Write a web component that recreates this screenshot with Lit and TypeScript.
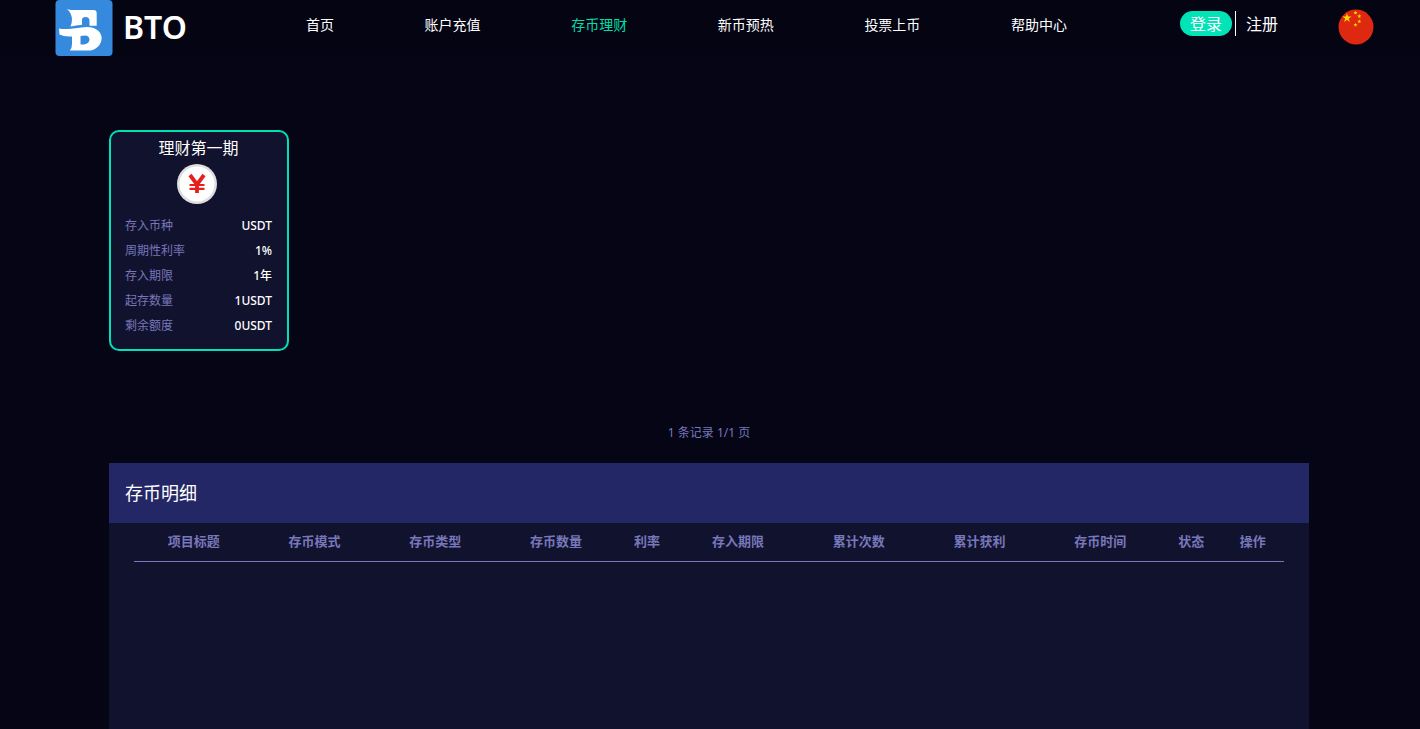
import { LitElement, html, css, svg } from "lit";
import { customElement, property } from "lit/decorators.js";
import { classMap } from "lit/directives/class-map.js";

const STAR = "M0-10 2.25-3.1 9.5-3.1 3.65 1.2 5.9 8.1 0 3.8-5.9 8.1-3.65 1.2-9.5-3.1-2.25-3.1Z";

@customElement("site-header")
class SiteHeader extends LitElement {
  @property() active = "存币理财";

  private links = ["首页", "账户充值", "存币理财", "新币预热", "投票上币", "帮助中心"];

  static styles = css`
    :host {
      display: flex;
      height: 56px;
      padding: 0 46px 0 55px;
      background: #040413;
      color: #fff;
    }
    a {
      color: inherit;
      text-decoration: none;
    }
    .brand {
      display: flex;
      align-items: flex-start;
      gap: 10px;
      width: 251px;
      font: 600 32px/54px "Noto Sans", sans-serif;
    }
    .mark {
      display: block;
      width: 58px;
      height: 56px;
    }
    nav {
      flex: 1;
      display: flex;
      justify-content: space-between;
      font-size: 14px;
      line-height: 50px;
    }
    .current {
      color: #00dfa8;
    }
    .auth {
      display: flex;
      align-items: flex-start;
      gap: 3px;
      padding: 11px 0 0 113px;
      font-size: 16px;
    }
    .auth a {
      height: 25px;
      line-height: 27px;
    }
    .login {
      padding: 0 10px;
      border-radius: 13px;
      background: #00e4b8;
    }
    .register {
      padding-left: 10px;
      border-left: 1px solid #fff;
    }
    .lang {
      width: 36px;
      height: 36px;
      margin: 9px 0 0 60px;
      padding: 0;
      border: 0;
      background: none;
    }
    .lang svg {
      display: block;
    }
  `;

  render() {
    return html`
      <a class="brand" href="#">
        <svg class="mark" viewBox="0 0 58 56" aria-hidden="true">
          <rect x="0.500" width="57" height="56" rx="4" fill="#368ade" />
          <path
            fill="#fff"
            d="M12 9.200C16 10.300 20 10 24 10H38.500Q41.700 10 41.700 13V25.800H34.500V21Q34.500 17 30.500 17Q27 17 27 20V24.800Q21 25.500 15.500 26.500Q17 23 17 19Q16.500 12.500 12 9.200Z"
          />
          <path
            fill="#fff"
            fill-rule="evenodd"
            d="M4 28.500Q8 29.500 16 28.800L29 27.200Q38 26.500 43 30.500Q48 35 46 42Q43.500 48.500 36 50.500H14.800Q17 48.500 17 44V36.500Q9 37 4.500 34.500ZM25.500 36V44.500H29Q34.500 43.500 34.500 39.500Q34 35.500 30 35.500Z"
          />
        </svg>
        BTO
      </a>
      <nav>
        ${this.links.map(
          (l) => html`<a href="#" class=${classMap({ current: l === this.active })}>${l}</a>`
        )}
      </nav>
      <div class="auth">
        <a class="login" href="#">登录</a>
        <a class="register" href="#">注册</a>
      </div>
      <button class="lang" type="button" aria-label="简体中文">
        <svg width="36" height="36" viewBox="0 0 36 36">
          <circle cx="18" cy="18" r="17.500" fill="#de2910" />
          <g fill="#ffde00">
            <path d=${STAR} transform="translate(9 9) scale(.48)" />
            ${[[17.5, 3.8], [21.3, 7.3], [21.3, 12.5], [17.5, 16]].map(
              ([x, y]) => svg`<path d=${STAR} transform="translate(${x} ${y}) scale(.22)" />`
            )}
          </g>
        </svg>
      </button>
    `;
  }
}

@customElement("plan-card")
class PlanCard extends LitElement {
  @property() name = "";
  @property({ attribute: false }) facts: [string, string][] = [];

  static styles = css`
    :host {
      box-sizing: border-box;
      width: 180px;
      padding: 4px 15px 11px 14px;
      border: 2px solid #00e0b5;
      border-radius: 10px;
      background: #11122e;
    }
    h3 {
      margin: 0 0 4px;
      font-weight: 400;
      font-size: 16px;
      line-height: 24px;
      text-align: center;
      color: #fff;
    }
    .coin {
      display: block;
      width: 40px;
      height: 40px;
      margin: 0 auto 9px 52px;
    }
    dl {
      margin: 0;
      font-size: 12px;
      line-height: 25px;
    }
    .fact {
      display: flex;
      justify-content: space-between;
    }
    dt {
      color: #7777ba;
    }
    dd {
      margin: 0;
      font-weight: 500;
      color: #fff;
    }
  `;

  render() {
    return html`
      <h3>${this.name}</h3>
      <svg class="coin" viewBox="0 0 40 40" aria-hidden="true">
        <circle cx="20" cy="20" r="20" fill="#dedede" />
        <circle cx="20" cy="20" r="17.500" fill="#fff" />
        <path
          d="M13 11 20 20.500 27 11M20 20V29"
          fill="none"
          stroke="#e5201c"
          stroke-width="3.800"
        />
        <path d="M12.500 21H27.500M12.500 24.800H27.500" stroke="#e5201c" stroke-width="2.200" />
      </svg>
      <dl>
        ${this.facts.map(
          ([k, v]) => html`<div class="fact"><dt>${k}</dt><dd>${v}</dd></div>`
        )}
      </dl>
    `;
  }
}

@customElement("app-root")
class AppRoot extends LitElement {
  private facts: [string, string][] = [
    ["存入币种", "USDT"],
    ["周期性利率", "1%"],
    ["存入期限", "1年"],
    ["起存数量", "1USDT"],
    ["剩余额度", "0USDT"],
  ];

  private columns = [
    "项目标题", "存币模式", "存币类型", "存币数量", "利率", "存入期限",
    "累计次数", "累计获利", "存币时间", "状态", "操作",
  ];

  static styles = css`
    :host {
      display: flex;
      flex-direction: column;
      min-height: 100vh;
      box-sizing: border-box;
      background: #050516;
      font-family: "Noto Sans", "Noto Sans CJK SC", sans-serif;
    }
    main {
      flex: 1;
      display: flex;
      flex-direction: column;
      width: 100%;
      max-width: 1200px;
      margin: 0 auto;
      padding: 74px 2px 0 0;
    }
    .plans {
      display: flex;
      flex-wrap: wrap;
      gap: 20px;
    }
    .pager {
      margin: 72px 0 20px;
      font-size: 12px;
      line-height: 20px;
      text-align: center;
      color: #7777ba;
    }
    .records {
      flex: 1;
      background: #11122e;
    }
    h2 {
      margin: 0;
      padding-left: 16px;
      background: #242766;
      color: #fff;
      font-weight: 400;
      font-size: 18px;
      line-height: 60px;
    }
    .scroll {
      padding: 0 25px;
    }
    table {
      width: 100%;
      border-collapse: collapse;
    }
    th {
      padding: 0 1px 2px 0;
      border-bottom: 1px solid #7777ba;
      color: #7777ba;
      font-weight: 700;
      font-size: 13px;
      line-height: 36px;
    }
  `;

  render() {
    return html`
      <site-header></site-header>
      <main>
        <section class="plans">
          <plan-card name="理财第一期" .facts=${this.facts}></plan-card>
        </section>
        <p class="pager">1 条记录 1/1 页</p>
        <section class="records">
          <h2>存币明细</h2>
          <div class="scroll">
            <table>
              <thead>
                <tr>${this.columns.map((c) => html`<th scope="col">${c}</th>`)}</tr>
              </thead>
              <tbody></tbody>
            </table>
          </div>
        </section>
      </main>
    `;
  }
}
